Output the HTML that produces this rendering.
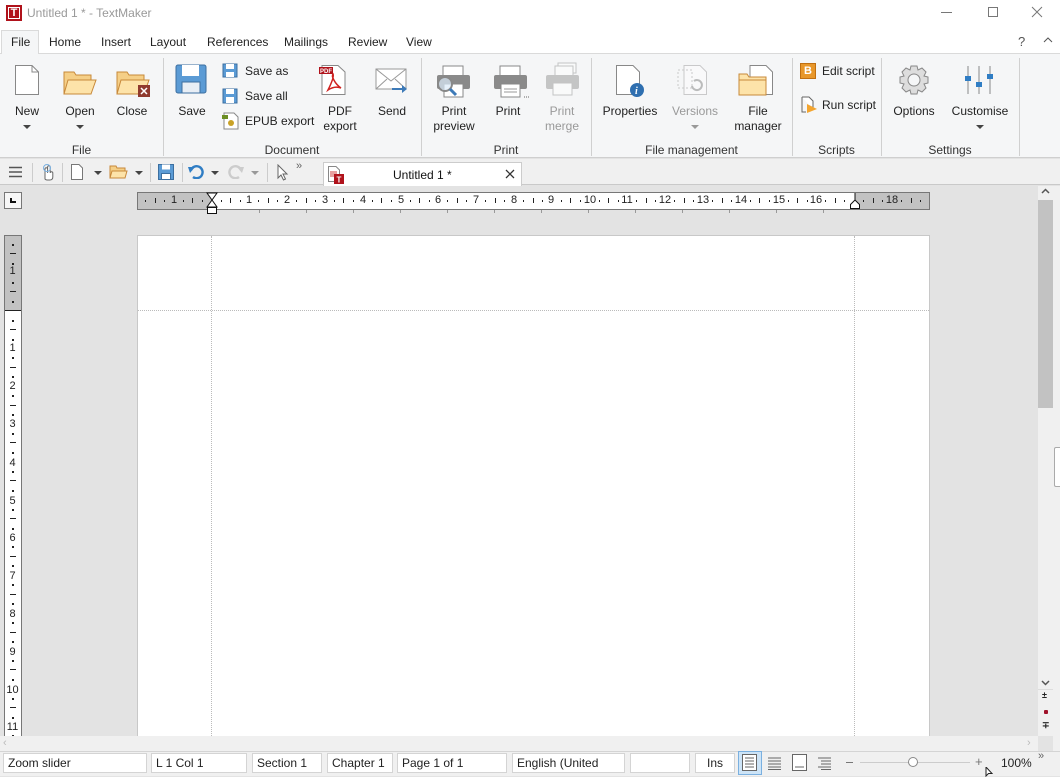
<!DOCTYPE html>
<html><head><meta charset="utf-8"><style>
*{margin:0;padding:0;box-sizing:border-box}
body{width:1060px;height:776px;overflow:hidden;background:#e3e3e3;font-family:"Liberation Sans",sans-serif;font-size:12px;color:#222;position:relative}
.a{position:absolute}
.t{position:absolute;white-space:nowrap}
.lbl{position:absolute;text-align:center;font-size:12px;line-height:15px;color:#222}
.grp{position:absolute;top:143px;font-size:12px;color:#333;text-align:center}
.sep{position:absolute;top:58px;width:1px;height:98px;background:#d0d0d0}
.dd{position:absolute;width:0;height:0;border-left:4px solid transparent;border-right:4px solid transparent;border-top:4px solid #444}
.sb{position:absolute;top:753px;height:20px;background:#fff;border:1px solid #d4d4d4;padding:2px 4px;font-size:12px;line-height:14px}
.hn{position:absolute;top:194px;font-size:11px;line-height:13px;color:#222;width:20px;margin-left:-10px;text-align:center}
.vn{position:absolute;left:5px;width:15px;font-size:11px;line-height:12px;text-align:center;color:#222}
</style></head><body>
<div class="a" style="left:0;top:0;width:1060px;height:28px;background:#fff"></div>
<div class="a" style="left:6px;top:5px;width:16px;height:16px;background:#b0121b;border:1px solid #b0121b"><div class="a" style="left:1px;top:1px;width:12px;height:12px;border:1px solid #fff;color:#fff;font-weight:bold;font-size:11px;line-height:10px;text-align:center">T</div></div>
<div class="t" style="left:27px;top:6px;color:#999;font-size:12px">Untitled 1 * - TextMaker</div>
<div class="a" style="left:941px;top:12px;width:11px;height:1px;background:#777"></div>
<div class="a" style="left:988px;top:7px;width:10px;height:10px;border:1px solid #777"></div>
<svg class="a" style="left:1031px;top:6px" width="12" height="12"><path d="M1 1L11 11M11 1L1 11" stroke="#777"/></svg>
<div class="a" style="left:0;top:28px;width:1060px;height:26px;background:#fff;border-bottom:1px solid #dadada"></div>
<div class="a" style="left:1px;top:30px;width:38px;height:25px;background:#f5f6f7;border:1px solid #dadada;border-bottom:none"></div>
<div class="t" style="left:11px;top:35px">File</div>
<div class="t" style="left:49px;top:35px">Home</div>
<div class="t" style="left:101px;top:35px">Insert</div>
<div class="t" style="left:150px;top:35px">Layout</div>
<div class="t" style="left:207px;top:35px">References</div>
<div class="t" style="left:284px;top:35px">Mailings</div>
<div class="t" style="left:348px;top:35px">Review</div>
<div class="t" style="left:406px;top:35px">View</div>
<div class="t" style="left:1018px;top:34px;color:#555;font-size:13px">?</div>
<svg class="a" style="left:1043px;top:37px" width="10" height="6"><path d="M1 5L5 1L9 5" stroke="#555" fill="none"/></svg>
<div class="a" style="left:0;top:54px;width:1060px;height:104px;background:#f5f6f7;border-bottom:1px solid #cfcfcf"></div>
<div class="sep" style="left:163px"></div><div class="sep" style="left:421px"></div><div class="sep" style="left:591px"></div><div class="sep" style="left:792px"></div><div class="sep" style="left:881px"></div><div class="sep" style="left:1019px"></div>
<svg class="a" style="left:14px;top:64px" width="26" height="32"><path d="M1.5 1.5H18L24.5 8V30.5H1.5Z" fill="#fff" stroke="#888"/><path d="M18 1.5V8H24.5" fill="none" stroke="#888"/></svg>
<div class="lbl" style="left:5px;top:104px;width:44px">New</div><div class="dd" style="left:23px;top:125px"></div>
<svg class="a" style="left:63px;top:70px" width="34" height="26"><path d="M1 2H11L13 5H28V24H1Z" fill="#f5cf87" stroke="#c8893a"/><path d="M5 10H33L28 24H1Z" fill="#fde3a9" stroke="#c8893a"/></svg>
<div class="lbl" style="left:58px;top:104px;width:44px">Open</div><div class="dd" style="left:76px;top:125px"></div>
<svg class="a" style="left:116px;top:70px" width="36" height="28"><path d="M1 2H11L13 5H28V24H1Z" fill="#f5cf87" stroke="#c8893a"/><path d="M5 10H33L28 24H1Z" fill="#fde3a9" stroke="#c8893a"/><rect x="22" y="15" width="12" height="12" fill="#8f3a2e"/><path d="M25 18L31 24M31 18L25 24" stroke="#fff" stroke-width="1.5"/></svg>
<div class="lbl" style="left:110px;top:104px;width:44px">Close</div>
<div class="grp" style="left:0;width:163px">File</div>
<svg class="a" style="left:175px;top:64px" width="32" height="30"><rect x="1" y="1" width="30" height="28" rx="2" fill="#5b9bd5" stroke="#3c6fa0"/><rect x="7" y="1" width="17" height="11" fill="#fff"/><rect x="7" y="18" width="18" height="11" fill="#e8eef5" stroke="#3c6fa0"/></svg>
<div class="lbl" style="left:170px;top:104px;width:44px">Save</div>
<svg class="a" style="left:222px;top:63px" width="16" height="16"><rect x="1" y="1" width="14" height="13" fill="#5b9bd5" stroke="#3c6fa0"/><rect x="4" y="1" width="8" height="5" fill="#fff"/><rect x="4" y="9" width="8" height="5" fill="#fff"/></svg>
<div class="t" style="left:245px;top:64px">Save as</div>
<svg class="a" style="left:222px;top:88px" width="16" height="16"><rect x="1" y="1" width="14" height="14" fill="#5b9bd5" stroke="#3c6fa0"/><rect x="4" y="1" width="8" height="5" fill="#fff"/><rect x="4" y="9" width="8" height="6" fill="#fff"/></svg>
<div class="t" style="left:245px;top:89px">Save all</div>
<svg class="a" style="left:221px;top:112px" width="18" height="18"><path d="M3 1H13L17 5V17H3Z" fill="#fff" stroke="#888"/><rect x="1" y="3" width="6" height="4" fill="#6b8e23"/><circle cx="10" cy="11" r="3" fill="#c9a227"/></svg>
<div class="t" style="left:245px;top:114px">EPUB export</div>
<svg class="a" style="left:318px;top:64px" width="30" height="32"><path d="M4 1.5H20L27 8V30.5H4Z" fill="#fff" stroke="#888"/><rect x="1" y="3" width="14" height="7" fill="#b0121b"/><text x="2" y="9" font-size="6" fill="#fff" font-family="Liberation Sans" font-weight="bold">PDF</text><path d="M10 26C14 18 16 12 15 10C13 12 17 20 23 24C18 22 13 24 10 26Z" fill="none" stroke="#d0211f" stroke-width="1.5"/></svg>
<div class="lbl" style="left:314px;top:104px;width:52px">PDF<br>export</div>
<svg class="a" style="left:375px;top:68px" width="34" height="26"><rect x="1" y="1" width="30" height="20" fill="#fff" stroke="#999"/><path d="M1 1L16 13L31 1M1 21L12 11M31 21L20 11" fill="none" stroke="#999"/><path d="M17 20H27V17L32 21L27 25V22H17Z" fill="#3d7ab8"/></svg>
<div class="lbl" style="left:370px;top:104px;width:44px">Send</div>
<div class="grp" style="left:163px;width:258px">Document</div>
<svg class="a" style="left:433px;top:64px" width="40" height="36"><rect x="10" y="2" width="20" height="10" fill="#fff" stroke="#888"/><rect x="4" y="11" width="33" height="14" rx="2" fill="#8a8a8a"/><rect x="11" y="20" width="19" height="13" fill="#fff" stroke="#888"/><circle cx="12" cy="20" r="7" fill="rgba(220,235,250,.7)" stroke="#888" stroke-width="2"/><path d="M17 25L23 31" stroke="#3d7ab8" stroke-width="3"/></svg>
<div class="lbl" style="left:426px;top:104px;width:56px">Print<br>preview</div>
<svg class="a" style="left:490px;top:64px" width="40" height="36"><rect x="10" y="2" width="20" height="10" fill="#fff" stroke="#888"/><rect x="4" y="11" width="33" height="14" rx="2" fill="#8a8a8a"/><rect x="11" y="20" width="19" height="13" fill="#fff" stroke="#888"/><path d="M14 25H27M14 28H27" stroke="#999"/><path d="M34 33h1M36 33h1M38 33h1" stroke="#666"/></svg>
<div class="lbl" style="left:486px;top:104px;width:44px">Print</div>
<svg class="a" style="left:544px;top:62px" width="38" height="36" opacity=".45"><rect x="14" y="1" width="18" height="10" fill="#fff" stroke="#888"/><rect x="11" y="4" width="18" height="10" fill="#fff" stroke="#888"/><rect x="2" y="13" width="33" height="14" rx="2" fill="#8a8a8a"/><rect x="9" y="21" width="19" height="12" fill="#fff" stroke="#888"/></svg>
<div class="lbl" style="left:540px;top:104px;width:44px;color:#999">Print<br>merge</div>
<div class="grp" style="left:421px;width:170px">Print</div>
<svg class="a" style="left:615px;top:64px" width="32" height="34"><path d="M1.5 1.5H18L24.5 8V30.5H1.5Z" fill="#fff" stroke="#888"/><circle cx="22" cy="26" r="7" fill="#2f6fb0"/><text x="20" y="30" font-size="10" fill="#fff" font-style="italic" font-weight="bold" font-family="Liberation Serif">i</text></svg>
<div class="lbl" style="left:600px;top:104px;width:60px">Properties</div>
<svg class="a" style="left:676px;top:64px" width="34" height="32" opacity=".4"><path d="M8 1.5H24L30.5 8V30.5H8Z" fill="#fff" stroke="#888"/><rect x="2" y="6" width="14" height="18" fill="none" stroke="#888" stroke-dasharray="2 2"/><path d="M16 22a5 5 0 1 0 2-5" fill="none" stroke="#666" stroke-width="2"/></svg>
<div class="lbl" style="left:665px;top:104px;width:60px;color:#999">Versions</div><div class="dd" style="left:691px;top:125px;border-top-color:#999"></div>
<svg class="a" style="left:736px;top:64px" width="40" height="32"><path d="M14 1.5H30L36.5 8V30.5H14Z" fill="#fff" stroke="#888"/><path d="M3 10H11L13 13H30V31H3Z" fill="#fde3a9" stroke="#c8893a"/><path d="M3 16H30" stroke="#c8893a"/></svg>
<div class="lbl" style="left:728px;top:104px;width:60px">File<br>manager</div>
<div class="grp" style="left:591px;width:201px">File management</div>
<div class="a" style="left:800px;top:63px;width:16px;height:16px;background:#e8972a;border:1px solid #c06f10;color:#fff;font-weight:bold;font-size:11px;line-height:14px;text-align:center">B</div>
<div class="t" style="left:822px;top:64px">Edit script</div>
<svg class="a" style="left:800px;top:96px" width="18" height="18"><path d="M2 1H9L13 5V13" fill="#fff" stroke="#666"/><path d="M2 1V16H6" fill="none" stroke="#666"/><path d="M7 8L17 13L7 17Z" fill="#f3a530"/></svg>
<div class="t" style="left:822px;top:98px">Run script</div>
<div class="grp" style="left:792px;width:89px">Scripts</div>
<svg class="a" style="left:897px;top:64px" width="34" height="32"><g transform="translate(17 16)"><path d="M-3-14h6l1 4 4-2 4 4-2 4 4 1v6l-4 1 2 4-4 4-4-2-1 4h-6l-1-4-4 2-4-4 2-4-4-1v-6l4-1-2-4 4-4 4 2z" fill="#ddd" stroke="#888"/><circle r="6" fill="#f5f6f7" stroke="#888"/></g></svg>
<div class="lbl" style="left:889px;top:104px;width:50px">Options</div>
<svg class="a" style="left:963px;top:64px" width="34" height="32"><path d="M5 2V30M16 2V30M27 2V30" stroke="#888"/><rect x="2" y="12" width="6" height="5" fill="#2f7dc4"/><rect x="13" y="18" width="6" height="5" fill="#2f7dc4"/><rect x="24" y="10" width="6" height="5" fill="#2f7dc4"/></svg>
<div class="lbl" style="left:948px;top:104px;width:64px">Customise</div><div class="dd" style="left:976px;top:125px"></div>
<div class="grp" style="left:881px;width:138px">Settings</div>
<div class="a" style="left:0;top:159px;width:1060px;height:26px;background:#f0f0f0;border-bottom:1px solid #c9c9c9"></div>
<svg class="a" style="left:9px;top:166px" width="14" height="12"><path d="M0 1.5H13M0 6H13M0 10.5H13" stroke="#555" stroke-width="1.6"/></svg>
<div class="a" style="left:32px;top:163px;width:1px;height:19px;background:#ccc"></div>
<svg class="a" style="left:40px;top:163px" width="16" height="18"><path d="M5 16V6a1.3 1.3 0 0 1 2.6 0V10V4a1.3 1.3 0 0 1 2.6 0V10a1.3 1.3 0 0 1 2.6 0v4c0 2-1 3-3 3H7c-1 0-2-1-2-1z" fill="#fff" stroke="#666"/><circle cx="7" cy="5" r="3.5" fill="none" stroke="#7ab0e0"/></svg>
<div class="a" style="left:62px;top:163px;width:1px;height:19px;background:#ccc"></div>
<svg class="a" style="left:71px;top:164px" width="12" height="16"><path d="M.5 .5H8L11.5 4V15.5H.5Z" fill="#fff" stroke="#777"/></svg>
<div class="dd" style="left:94px;top:171px"></div>
<svg class="a" style="left:109px;top:165px" width="19" height="14"><path d="M1 1H7L8 3H16V13H1Z" fill="#f5cf87" stroke="#c8893a"/><path d="M3 6H18L16 13H1Z" fill="#fde3a9" stroke="#c8893a"/></svg>
<div class="dd" style="left:135px;top:171px"></div>
<div class="a" style="left:150px;top:163px;width:1px;height:19px;background:#ccc"></div>
<svg class="a" style="left:158px;top:164px" width="16" height="16"><rect x=".5" y=".5" width="15" height="15" fill="#5b9bd5" stroke="#3c6fa0"/><rect x="4" y=".5" width="8" height="5" fill="#fff"/><rect x="3.5" y="9.5" width="9" height="6" fill="#fff" stroke="#3c6fa0"/></svg>
<div class="a" style="left:182px;top:163px;width:1px;height:19px;background:#ccc"></div>
<svg class="a" style="left:188px;top:164px" width="16" height="15"><path d="M3 6a6 6 0 1 1 2 7" fill="none" stroke="#2f7dc4" stroke-width="2.4"/><path d="M0 3L7 3L2 9Z" fill="#2f7dc4"/></svg>
<div class="dd" style="left:211px;top:171px"></div>
<svg class="a" style="left:228px;top:164px" width="16" height="15"><path d="M13 6a6 6 0 1 0-2 7" fill="none" stroke="#ccc" stroke-width="2.4"/><path d="M16 3L9 3L14 9Z" fill="#ccc"/></svg>
<div class="dd" style="left:251px;top:171px;border-top-color:#999"></div>
<div class="a" style="left:267px;top:163px;width:1px;height:19px;background:#ccc"></div>
<svg class="a" style="left:277px;top:164px" width="12" height="17"><path d="M1 1V14L4 11L6.5 16L8.5 15L6 10H10Z" fill="#fff" stroke="#666"/></svg>
<div class="t" style="left:296px;top:160px;font-size:11px;color:#666">»</div>
<div class="a" style="left:323px;top:162px;width:199px;height:24px;background:#fff;border:1px solid #ccc;border-bottom:none"></div>
<svg class="a" style="left:327px;top:166px" width="18" height="18"><path d="M1.5 .5H9L12.5 4V15.5H1.5Z" fill="#fff" stroke="#888"/><path d="M3 6H10M3 8H10M3 10H8" stroke="#d04040"/><rect x="7" y="8" width="10" height="10" fill="#b0121b"/><text x="9.5" y="16.5" font-size="8" font-weight="bold" fill="#fff" font-family="Liberation Sans">T</text></svg>
<div class="t" style="left:393px;top:168px;color:#111">Untitled 1 *</div>
<svg class="a" style="left:505px;top:169px" width="10" height="10"><path d="M1 1L9 9M9 1L1 9" stroke="#333" stroke-width="1.3"/></svg>
<div class="a" style="left:4px;top:192px;width:18px;height:17px;background:#f7f7f7;border:1px solid #777"></div>
<div class="a" style="left:10px;top:198px;width:6px;height:5px;border-left:2px solid #111;border-bottom:2px solid #111"></div>
<div class="a" style="left:137px;top:192px;width:793px;height:18px;background:#fff;border:1px solid #777"></div>
<div class="a" style="left:138px;top:193px;width:74px;height:16px;background:#c2c2c2"></div>
<div class="a" style="left:855px;top:193px;width:74px;height:16px;background:#c2c2c2"></div>
<div id="hr"></div>
<svg class="a" style="left:206px;top:192px" width="12" height="24"><path d="M1 1H11L6 8Z M1 15L6 8L11 15Z" fill="#fff" stroke="#111"/><rect x="1.5" y="15.5" width="9" height="6" fill="#fff" stroke="#111"/></svg>
<svg class="a" style="left:849px;top:192px" width="12" height="18"><path d="M6 1V8L1.5 12.5V16.5H10.5V12.5L6 8" fill="#fff" stroke="#111"/></svg>
<div class="a" style="left:4px;top:235px;width:18px;height:505px;background:#fff;border:1px solid #777;border-bottom:none"></div>
<div class="a" style="left:5px;top:236px;width:16px;height:75px;background:#c2c2c2;border-bottom:1px solid #222"></div>
<div id="vr"></div>
<div class="a" style="left:137px;top:235px;width:793px;height:501px;background:#fff;border:1px solid #c8c8c8;border-bottom:none"></div>
<div class="a" style="left:211px;top:236px;width:0;height:500px;border-left:1px dotted #bbb"></div>
<div class="a" style="left:854px;top:236px;width:0;height:500px;border-left:1px dotted #bbb"></div>
<div class="a" style="left:138px;top:310px;width:791px;height:0;border-top:1px dotted #bbb"></div>
<div class="a" style="left:1038px;top:186px;width:15px;height:550px;background:#f0f0f0"></div>
<div class="a" style="left:1053px;top:186px;width:7px;height:565px;background:#f0f0f0"></div>
<svg class="a" style="left:1041px;top:188px" width="9" height="6"><path d="M1 5L4.5 1.5L8 5" stroke="#555" stroke-width="1.5" fill="none"/></svg>
<div class="a" style="left:1038px;top:200px;width:15px;height:208px;background:#c2c2c2"></div>
<div class="a" style="left:1054px;top:447px;width:6px;height:40px;border:1px solid #aaa;border-right:none;background:#fff;border-radius:2px 0 0 2px"></div>
<svg class="a" style="left:1041px;top:680px" width="9" height="6"><path d="M1 1L4.5 4.5L8 1" stroke="#555" stroke-width="1.5" fill="none"/></svg>
<div class="a" style="left:1038px;top:689px;width:15px;height:47px;background:#f0f0f0;border-top:1px solid #ddd"></div>
<div class="t" style="left:1042px;top:690px;font-size:9px;font-weight:bold">±</div>
<div class="a" style="left:1044px;top:710px;width:4px;height:4px;background:#a0122a;border-radius:1px"></div>
<div class="t" style="left:1042px;top:720px;font-size:9px;font-weight:bold">∓</div>
<div class="a" style="left:0;top:736px;width:1038px;height:15px;background:#f0f0f0"></div>
<div class="t" style="left:3px;top:737px;color:#bbb;font-size:11px">‹</div>
<div class="t" style="left:1027px;top:737px;color:#bbb;font-size:11px">›</div>
<div class="a" style="left:0;top:751px;width:1060px;height:25px;background:#f0f0f0;border-top:1px solid #d4d4d4"></div>
<div class="sb" style="left:3px;width:144px">Zoom slider</div>
<div class="sb" style="left:151px;width:96px">L 1 Col 1</div>
<div class="sb" style="left:252px;width:70px">Section 1</div>
<div class="sb" style="left:327px;width:66px">Chapter 1</div>
<div class="sb" style="left:397px;width:110px">Page 1 of 1</div>
<div class="sb" style="left:512px;width:113px">English (United</div>
<div class="sb" style="left:630px;width:60px"></div>
<div class="sb" style="left:695px;width:40px;text-align:center">Ins</div>
<div class="a" style="left:738px;top:751px;width:24px;height:24px;background:#cde4f7;border:1px solid #7ab0e0"></div>
<svg class="a" style="left:742px;top:754px" width="16" height="18"><rect x=".5" y=".5" width="14" height="16" fill="#fff" stroke="#666"/><path d="M3 4H12M3 7H12M3 10H12M3 13H12" stroke="#666"/></svg>
<svg class="a" style="left:768px;top:757px" width="14" height="13"><path d="M0 1H13M0 4H13M0 7H13M0 10H13M0 12.5H13" stroke="#666"/></svg>
<svg class="a" style="left:792px;top:754px" width="16" height="18"><rect x=".5" y=".5" width="14" height="16" fill="#fff" stroke="#666"/><path d="M3 13H12" stroke="#666"/></svg>
<svg class="a" style="left:818px;top:757px" width="14" height="13"><path d="M0 1H13M3 4H13M3 7H13M0 10H13M3 12.5H13" stroke="#666"/></svg>
<div class="a" style="left:846px;top:762px;width:7px;height:1px;background:#777"></div>
<div class="a" style="left:860px;top:762px;width:110px;height:1px;background:#ccc"></div>
<div class="a" style="left:908px;top:757px;width:10px;height:10px;border-radius:50%;background:#fff;border:1px solid #888"></div>
<div class="t" style="left:975px;top:754px;color:#777;font-size:13px">+</div>
<div class="t" style="left:1001px;top:756px">100%</div>
<div class="t" style="left:1038px;top:750px;font-size:11px;color:#666">»</div>
<svg class="a" style="left:985px;top:767px" width="10" height="10"><path d="M1 0V9L3.5 6.5H7Z" fill="#fff" stroke="#222"/></svg>
<script>
var h='',hp=[[174,'1'],[249,'1'],[287,'2'],[325,'3'],[363,'4'],[401,'5'],[438,'6'],[476,'7'],[514,'8'],[551,'9'],[590,'10'],[627,'11'],[665,'12'],[703,'13'],[741,'14'],[779,'15'],[816,'16'],[892,'18']];
hp.forEach(function(p){h+='<div class="hn" style="left:'+p[0]+'px">'+p[1]+'</div>';});
for(var i=-3;i<=18;i++){for(var j=1;j<=3;j++){var x=Math.round(249+i*37.8+j*9.45-37.8);if(x<140||x>927||Math.abs(x-212)<4)continue;
if(j==2)h+='<div class="a" style="left:'+x+'px;top:198px;width:1px;height:5px;background:#222"></div>';
else h+='<div class="a" style="left:'+x+'px;top:200px;width:1px;height:2px;background:#222"></div>';}}
for(var x=259;x<850;x+=47){h+='<div class="a" style="left:'+x+'px;top:210px;width:1px;height:3px;background:#999"></div>';}
document.getElementById('hr').innerHTML=h;
var v='',vp=[[271,'1'],[348,'1'],[386,'2'],[424,'3'],[463,'4'],[501,'5'],[538,'6'],[576,'7'],[614,'8'],[652,'9'],[690,'10'],[727,'11']];
vp.forEach(function(p){v+='<div class="vn" style="top:'+(p[0]-6)+'px">'+p[1]+'</div>';});
for(var i=-3;i<=11;i++){for(var j=1;j<=3;j++){var y=Math.round(348+i*37.8+j*9.45-37.8);if(y<238||y>735||Math.abs(y-311)<3)continue;
if(j==2)v+='<div class="a" style="top:'+y+'px;left:10px;height:1px;width:6px;background:#222"></div>';
else v+='<div class="a" style="top:'+y+'px;left:12px;height:2px;width:2px;background:#222"></div>';}}
document.getElementById('vr').innerHTML=v;
</script>
</body></html>
